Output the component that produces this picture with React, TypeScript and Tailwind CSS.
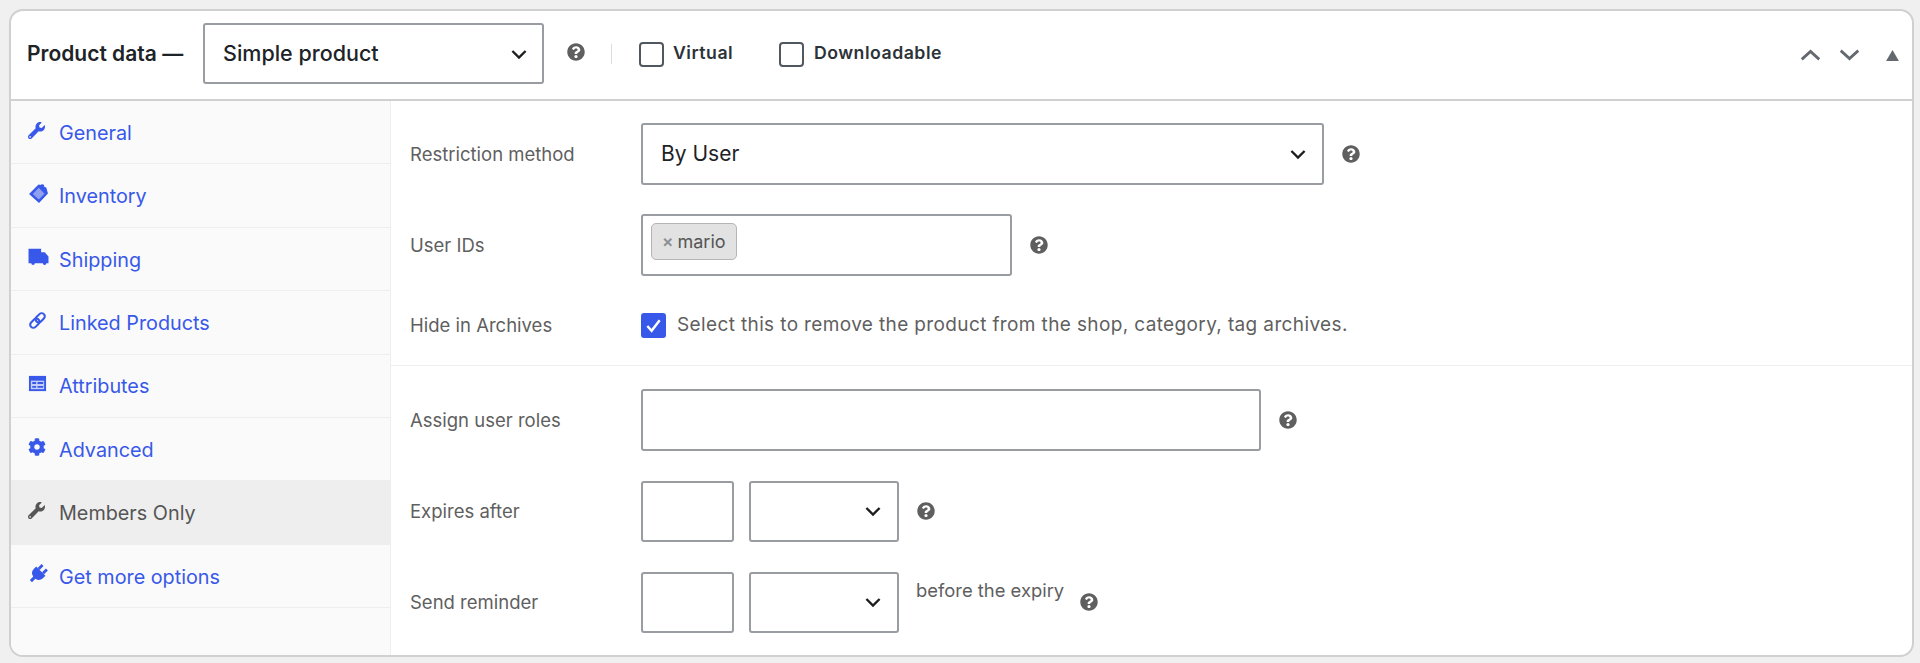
import React from "react";
import { FaWrench, FaCog, FaQuestionCircle } from "react-icons/fa";

const Help = ({ className = "" }: { className?: string }) => (
  <FaQuestionCircle className={"w-[18px] h-[18px] text-[#5f5f5f] shrink-0 " + className} />
);

const Chevron = ({ className = "" }: { className?: string }) => (
  <svg viewBox="0 0 20 20" className={"w-[24px] h-[24px] " + className} fill="none" stroke="#1e1e1e" strokeWidth="2">
    <path d="M4.500 7.500 10 13l5.500-5.500" />
  </svg>
);

const TagIcon = () => (
  <svg viewBox="0 0 20 20" className="w-[21px] h-[21px]" fill="currentColor">
    <path d="M1 10.500 10 1.500l2.500.5L13 1l2.500 1-.5 1 2.500 1.500L19 10l-8.500 9z" />
    <path d="M4.500 10.500 10.200 4.500l5.500 5.800-5.400 5.500z" fill="#8fa0f0" />
  </svg>
);

const TruckIcon = () => (
  <svg viewBox="0 0 20 20" className="w-[21px] h-[21px]" fill="currentColor">
    <path d="M0.500 2.500h12v3.500h3.500l3.500 4v6.500h-2a1.700 1.700 0 0 1-3.400 0H6.500a1.700 1.700 0 0 1-3.400 0H0.500z" />
  </svg>
);

const LinkIcon = () => (
  <svg viewBox="0 0 20 20" className="w-[19px] h-[19px]" fill="none" stroke="currentColor" strokeWidth="2.200">
    <g transform="rotate(-45 10 10)">
      <rect x="0.500" y="6.700" width="11" height="6.600" rx="3.300" />
      <rect x="8.500" y="6.700" width="11" height="6.600" rx="3.300" />
    </g>
  </svg>
);

const AttrIcon = () => (
  <svg viewBox="0 0 20 20" className="w-[19px] h-[19px]" fill="currentColor">
    <path d="M1 2h18v16H1z" />
    <path d="M3 7h14v9H3z" fill="#c5cef8" />
    <path d="M4.500 8.500h4v2h-4zM10 8.500h6v2h-6zM4.500 12.500h4v2h-4zM10 12.500h6v2h-6z" />
  </svg>
);

const PlugIcon = () => (
  <svg viewBox="0 0 20 20" className="w-[20px] h-[20px]" fill="currentColor">
    <g transform="rotate(45 10 10)">
      <path d="M5.500 0.500h2.800v5.500H5.500zM11.700 0.500h2.800v5.500h-2.800z" />
      <path d="M3.500 6h13v3.500a6 6 0 0 1-5 5.700V20h-3v-4.800a6 6 0 0 1-5-5.700z" />
    </g>
  </svg>
);

const items: { label: string; icon: React.ReactNode; active?: boolean }[] = [
  { label: "General", icon: <FaWrench className="w-[17px] h-[17px]" /> },
  { label: "Inventory", icon: <TagIcon /> },
  { label: "Shipping", icon: <TruckIcon /> },
  { label: "Linked Products", icon: <LinkIcon /> },
  { label: "Attributes", icon: <AttrIcon /> },
  { label: "Advanced", icon: <FaCog className="w-[18px] h-[18px]" /> },
  { label: "Members Only", icon: <FaWrench className="w-[17px] h-[17px]" />, active: true },
  { label: "Get more options", icon: <PlugIcon /> },
];

const Box = ({ className = "", children }: { className?: string; children?: React.ReactNode }) => (
  <div className={"border-2 border-[#999ca0] rounded-[3px] bg-white shrink-0 " + className}>{children}</div>
);

const Label = ({ children }: { children: React.ReactNode }) => (
  <div className="w-[250px] pl-[19px] shrink-0 text-[18.500px] leading-[24px] text-[#5f5f5f]">{children}</div>
);

const SmallSelect = () => (
  <Box className="w-[150px] h-[61px] flex items-center justify-end pr-[12px]">
    <Chevron />
  </Box>
);

export default function App() {
  return (
    <div
      className="w-[1920px] h-[663px] bg-[#f0f0f1] pt-[9px] pl-[9px] overflow-hidden"
      style={{ fontFamily: "Inter, 'Liberation Sans', sans-serif" }}
    >
      <div className="w-[1905px] h-[648px] bg-white border-2 border-[#d0d0d2] rounded-[14px] overflow-hidden flex flex-col">
        <div className="h-[90px] shrink-0 border-b-2 border-[#d0d0d2] pb-[3px] flex items-center">
          <div className="pl-[16px] w-[192px] shrink-0 text-[21px] font-semibold text-[#1d2327] whitespace-nowrap">Product data —</div>
          <Box className="w-[341px] h-[61px] flex items-center justify-between pl-[18px] pr-[11px] text-[21.500px] font-medium text-[#1d2327]">
            <span>Simple product</span>
            <Chevron />
          </Box>
          <Help className="ml-[23px] -mt-[3px]" />
          <div className="ml-[26px] w-px h-[20px] bg-[#dcdcde]" />
          <div className="ml-[27px] mt-[2px] w-[25px] h-[25px] border-2 border-[#50575e] rounded-[4px] shrink-0" />
          <span className="ml-[9px] w-[106px] text-[17.700px] font-semibold tracking-[0.5px] text-[#2c3338]">Virtual</span>
          <div className="mt-[2px] w-[25px] h-[25px] border-2 border-[#50575e] rounded-[4px] shrink-0" />
          <span className="ml-[10px] text-[17.700px] font-semibold tracking-[0.5px] text-[#2c3338]">Downloadable</span>
          <div className="ml-auto mt-[3px] pr-[13px] flex items-center gap-[18px]">
            <svg viewBox="0 0 24 16" className="w-[21px] h-[14px]" fill="none" stroke="#646970" strokeWidth="3.200">
              <path d="M2 13 12 4l10 9" />
            </svg>
            <svg viewBox="0 0 24 16" className="w-[21px] h-[14px]" fill="none" stroke="#646970" strokeWidth="3.200">
              <path d="M2 3l10 9 10-9" />
            </svg>
            <svg viewBox="0 0 14 12" className="ml-[8px] w-[13px] h-[11px]" fill="#646970">
              <path d="M7 0l7 12H0z" />
            </svg>
          </div>
        </div>
        <div className="flex flex-1 min-h-0">
          <div className="w-[380px] shrink-0 bg-[#fafafa] border-r border-[#eeeeee] flex flex-col">
            {items.map((it) => (
              <div
                key={it.label}
                className={
                  "h-[63.400px] shrink-0 flex items-center pl-[17px] border-b border-[#eeeeee] text-[19.800px] " +
                  (it.active ? "bg-[#eeeeee] text-[#555555]" : "text-[#3858e9]")
                }
              >
                <span className="w-[31px] shrink-0 -mt-[4px] flex items-center">{it.icon}</span>
                <span className="mt-[3px]">{it.label}</span>
              </div>
            ))}
          </div>
          <div className="flex-1 flex flex-col">
            <div className="pt-[22px] pb-[25px] flex flex-col border-b border-[#eeeeee]">
              <div className="flex items-center">
                <Label>Restriction method</Label>
                <Box className="w-[683px] h-[62px] flex items-center justify-between pl-[18px] pr-[12px] text-[21px] text-[#1d2327]">
                  <span>By User</span>
                  <Chevron />
                </Box>
                <Help className="ml-[18px]" />
              </div>
              <div className="flex items-center mt-[29px]">
                <Label>User IDs</Label>
                <Box className="w-[371px] h-[62px] pl-[8px] pt-[7px]">
                  <div className="inline-flex items-center h-[37px] w-[86px] pl-[10px] gap-[4px] border border-[#b5b5b5] rounded-[5px] bg-[#e2e2e2] text-[18px] text-[#555555]">
                    <span className="text-[#8c8f94] text-[17px] font-semibold">×</span>
                    <span>mario</span>
                  </div>
                </Box>
                <Help className="ml-[18px]" />
              </div>
              <div className="flex items-center mt-[35px]">
                <Label>Hide in Archives</Label>
                <div className="w-[25px] h-[25px] rounded-[3px] bg-[#3858e9] shrink-0 flex items-center justify-center">
                  <svg viewBox="0 0 20 20" className="w-[19px] h-[19px]" fill="none" stroke="#ffffff" strokeWidth="2.600">
                    <path d="M3.500 10.500 8 15.500 16.500 4.500" />
                  </svg>
                </div>
                <span className="ml-[11px] text-[19px] tracking-[0.37px] text-[#5f5f5f] whitespace-nowrap">
                  Select this to remove the product from the shop, category, tag archives.
                </span>
              </div>
            </div>
            <div className="pt-[23px] flex flex-col">
              <div className="flex items-center">
                <Label>Assign user roles</Label>
                <Box className="w-[620px] h-[62px]" />
                <Help className="ml-[18px]" />
              </div>
              <div className="flex items-center mt-[30px]">
                <Label>Expires after</Label>
                <Box className="w-[93px] h-[61px] mr-[15px]" />
                <SmallSelect />
                <Help className="ml-[18px]" />
              </div>
              <div className="flex items-center mt-[30px]">
                <Label>Send reminder</Label>
                <Box className="w-[93px] h-[61px] mr-[15px]" />
                <SmallSelect />
                <span className="ml-[17px] text-[18.400px] text-[#5f5f5f] -mt-[22px] whitespace-nowrap">before the expiry</span>
                <Help className="ml-[16px]" />
              </div>
            </div>
          </div>
        </div>
      </div>
    </div>
  );
}
